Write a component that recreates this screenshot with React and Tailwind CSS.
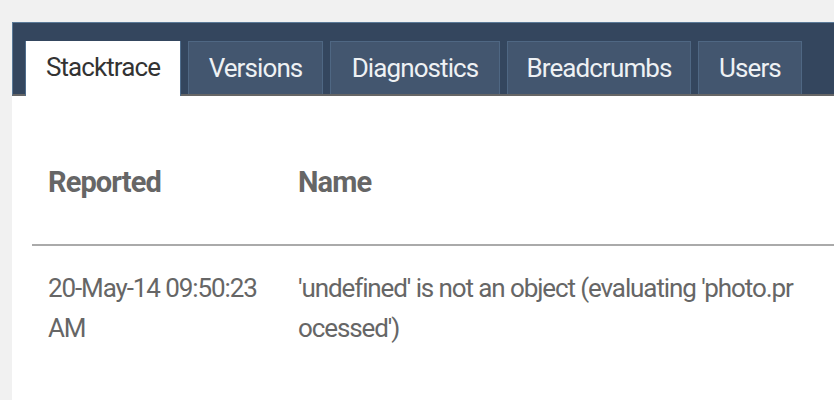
import React from "react";

const tabs = [
  { label: "Stacktrace", w: "w-[156px]", active: true },
  { label: "Versions", w: "w-[135px]" },
  { label: "Diagnostics", w: "w-[170px]" },
  { label: "Breadcrumbs", w: "w-[184px]" },
  { label: "Users", w: "w-[104px]" },
];

const App = () => {
  return (
    <div
      className="w-[834px] h-[400px] overflow-hidden bg-[#f1f1f1] pt-[22px] pl-[12px]"
      style={{ fontFamily: "Roboto, 'Liberation Sans', sans-serif" }}
    >
      <div className="bg-white h-[400px] overflow-hidden">
        {/* tab bar */}
        <div className="h-[74px] bg-[#34465e] border-t border-l border-[#5b7a98] border-b-2 border-b-[#666666] flex items-end gap-[7px] pl-[12px]">
          {tabs.map((t) =>
            t.active ? (
              <div
                key={t.label}
                className={`${t.w} h-[55px] -mb-[2px] pb-[2px] bg-white border-x border-[#4f6d8c] flex items-center justify-center text-[26px] tracking-[-0.9px] text-[#333333]`}
              >
                {t.label}
              </div>
            ) : (
              <div
                key={t.label}
                className={`${t.w} h-[53px] bg-[#43566f] border border-b-0 border-[#4f6783] flex items-center justify-center text-[26px] tracking-[-0.9px] text-[#eef1f4]`}
              >
                {t.label}
              </div>
            )
          )}
        </div>

        {/* table */}
        <div className="pl-[20px] pt-[68px] text-[#666666]">
          <div className="flex border-b-2 border-[#aaaaaa] pb-[44px]">
            <div className="w-[250px] pl-[16px] text-[29px] font-bold tracking-[-0.9px] leading-[36px]">
              Reported
            </div>
            <div className="pl-[16px] text-[29px] font-bold tracking-[-0.9px] leading-[36px]">
              Name
            </div>
          </div>
          <div className="flex pt-[22px] text-[26px] tracking-[-1.1px] leading-[40px]">
            <div className="w-[250px] pl-[16px] pr-[2px]">
              20-May-14 09:50:23 AM
            </div>
            <div className="w-[518px] pl-[16px] break-all">
              'undefined' is not an object (evaluating 'photo.processed')
            </div>
          </div>
        </div>
      </div>
    </div>
  );
};

export default App;
